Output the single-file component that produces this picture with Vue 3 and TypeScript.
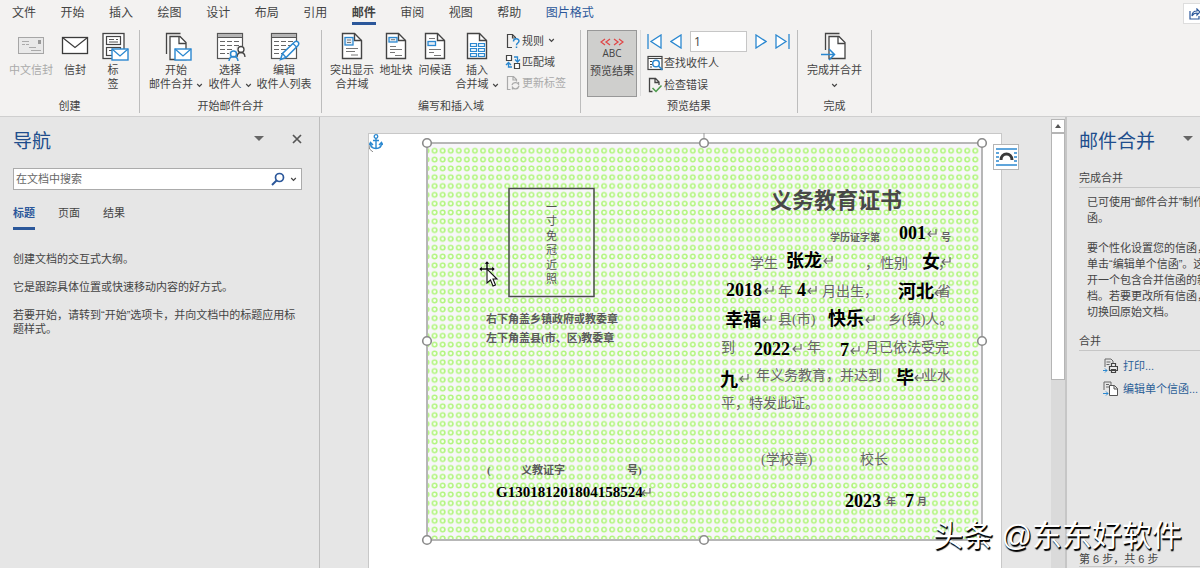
<script setup lang="ts">
import { ref } from 'vue'

interface BigCommand {
  icon: string
  lines: string[]
  size: string
  arrow?: boolean
  disabled?: boolean
}
interface Printed {
  x: number
  y: number
  text: string
  kind: string
}

const tabs = ['文件', '开始', '插入', '绘图', '设计', '布局', '引用', '邮件', '审阅', '视图', '帮助', '图片格式']
const activeTab = ref('邮件')

const createCommands: BigCommand[] = [
  { icon: 'cn-envelope', lines: ['中文信封'], size: 'w44', disabled: true },
  { icon: 'envelope', lines: ['信封'], size: 'w44' },
  { icon: 'labels', lines: ['标', '签'], size: 'w32' },
]
const startCommands: BigCommand[] = [
  { icon: 'start-merge', lines: ['开始', '邮件合并'], size: 'w56', arrow: true },
  { icon: 'recipients', lines: ['选择', '收件人'], size: 'w52', arrow: true },
  { icon: 'edit-list', lines: ['编辑', '收件人列表'], size: 'w56' },
]
const fieldCommands: BigCommand[] = [
  { icon: 'highlight', lines: ['突出显示', '合并域'], size: 'w44' },
  { icon: 'address', lines: ['地址块'], size: 'w44' },
  { icon: 'greeting', lines: ['问候语'], size: 'w34' },
  { icon: 'insert-field', lines: ['插入', '合并域'], size: 'w50', arrow: true },
]
const fieldTools = [
  { icon: 'rules', text: '规则', arrow: true, disabled: false },
  { icon: 'match', text: '匹配域', arrow: false, disabled: false },
  { icon: 'update', text: '更新标签', arrow: false, disabled: true },
]

const record = ref('1')
const query = ref('')
const navTabs = ['标题', '页面', '结果']
const activeNav = ref('标题')

const photoChars = ['一', '寸', '免', '冠', '近', '照']

const printed: Printed[] = [
  { x: 343, y: 65, text: '义务教育证书', kind: 'title' },
  { x: 403, y: 98, text: '学历证字第', kind: 'small' },
  { x: 514, y: 98, text: '号', kind: 'small' },
  { x: 323, y: 125, text: '学生', kind: 'body' },
  { x: 438, y: 125, text: '，', kind: 'body' },
  { x: 453, y: 125, text: '性别', kind: 'body' },
  { x: 511, y: 125, text: '，', kind: 'body' },
  { x: 351, y: 153, text: '年', kind: 'body' },
  { x: 395, y: 153, text: '月出生，', kind: 'body' },
  { x: 510, y: 153, text: '省', kind: 'body' },
  { x: 351, y: 181, text: '县(市)', kind: 'body' },
  { x: 461, y: 181, text: '乡(镇)人。', kind: 'body' },
  { x: 294, y: 209, text: '到', kind: 'body' },
  { x: 380, y: 209, text: '年', kind: 'body' },
  { x: 438, y: 209, text: '月已依法受完', kind: 'body' },
  { x: 329, y: 237, text: '年义务教育，并达到', kind: 'body' },
  { x: 496, y: 237, text: '业水', kind: 'body' },
  { x: 294, y: 265, text: '平，特发此证。', kind: 'body' },
  { x: 334, y: 321, text: '(学校章)', kind: 'body' },
  { x: 433, y: 321, text: '校长', kind: 'body' },
  { x: 459, y: 362, text: '年', kind: 'small' },
  { x: 490, y: 362, text: '月', kind: 'small' },
  { x: 59, y: 180, text: '右下角盖乡镇政府或教委章', kind: 'note' },
  { x: 59, y: 199, text: '左下角盖县(市、区)教委章', kind: 'note' },
  { x: 60, y: 331, text: '(', kind: 'note' },
  { x: 94, y: 331, text: '义教证字', kind: 'note' },
  { x: 200, y: 331, text: '号)', kind: 'note' },
]

const merged: Printed[] = [
  { x: 472, y: 96, text: '001', kind: 'field' },
  { x: 359, y: 124, text: '张龙', kind: 'field' },
  { x: 495, y: 125, text: '女', kind: 'field' },
  { x: 299, y: 153, text: '2018', kind: 'field' },
  { x: 370, y: 153, text: '4', kind: 'field' },
  { x: 471, y: 155, text: '河北', kind: 'field' },
  { x: 298, y: 183, text: '幸福', kind: 'field' },
  { x: 401, y: 182, text: '快乐', kind: 'field' },
  { x: 327, y: 212, text: '2022', kind: 'field' },
  { x: 413, y: 213, text: '7', kind: 'field' },
  { x: 293, y: 243, text: '九', kind: 'field' },
  { x: 469, y: 241, text: '毕', kind: 'field' },
  { x: 418, y: 364, text: '2023', kind: 'field' },
  { x: 478, y: 364, text: '7', kind: 'field' },
  { x: 69, y: 354, text: 'G130181201804158524', kind: 'serial' },
]

const marks = [
  [500, 86], [396, 113], [514, 114], [337, 143], [380, 143], [507, 145], [335, 172], [438, 172],
  [365, 201], [423, 203], [312, 231], [487, 230], [214, 345],
]
const handles = [
  [0, 0], [277, 0], [555, 0], [0, 198], [555, 198], [0, 397], [277, 397], [555, 397],
]
</script>

<template>
  <div class="word">
    <svg class="defs" aria-hidden="true">
      <defs>
        <symbol id="mini-envelope" viewBox="0 0 18 13">
          <rect x="1" y="1" width="16" height="11" fill="#fff" stroke="#2b88d0" stroke-width="1.4" />
          <path d="M1 1l8 7 8-7" fill="none" stroke="#2b88d0" stroke-width="1.3" />
        </symbol>
        <symbol id="page" viewBox="0 0 32 32">
          <path d="M6.5 3.5h12l7 7v18h-19z" fill="#fff" stroke="#444" stroke-width="1.4" />
          <path d="M18.5 3.5v7h7" fill="none" stroke="#444" stroke-width="1.4" />
        </symbol>
        <symbol id="cn-envelope" viewBox="0 0 32 32">
          <rect x="3.500" y="7.500" width="25" height="16" fill="#e9e9e9" stroke="#a6a6a6" />
          <path d="M7 11.500h7M7 14.500h3m1 0h3M14 17.500h7M16 20.500h10" stroke="#aaa" fill="none" />
          <rect x="23" y="10" width="3" height="4" fill="#999" />
        </symbol>
        <symbol id="envelope" viewBox="0 0 32 32">
          <rect x="3.500" y="7.500" width="25" height="16" fill="#fff" stroke="#3b3b3b" stroke-width="1.300" />
          <path d="M3.500 7.500L16 17.500l12.500-10" fill="none" stroke="#3b3b3b" stroke-width="1.200" />
        </symbol>
        <symbol id="labels" viewBox="0 0 32 32">
          <rect x="6" y="3.500" width="21" height="25" fill="#fff" stroke="#444" stroke-width="1.300" />
          <rect x="9.500" y="6.500" width="14" height="8" fill="none" stroke="#444" stroke-width="1.200" />
          <rect x="9.500" y="17.500" width="14" height="8" fill="none" stroke="#444" stroke-width="1.200" />
          <path d="M12 9.500h5m2 0h2M12 12h9M12 20.500h5" stroke="#555" fill="none" />
          <use href="#mini-envelope" x="14" y="18" width="18" height="13" />
        </symbol>
        <symbol id="start-merge" viewBox="0 0 32 32">
          <path d="M6.500 24V3.500h14" fill="none" stroke="#444" stroke-width="1.300" />
          <path d="M10 6.500h10l6 6v17H10z" fill="#fff" stroke="#444" stroke-width="1.300" />
          <path d="M19 6.500v7h7" fill="none" stroke="#444" stroke-width="1.300" />
          <use href="#mini-envelope" x="14" y="18" width="18" height="13" />
        </symbol>
        <symbol id="sheet" viewBox="0 0 32 32">
          <rect x="3.500" y="3.500" width="25" height="25" fill="#fff" stroke="#555" stroke-width="1.200" />
          <rect x="4" y="4" width="24" height="3.500" fill="#b5b5b5" />
          <path d="M4 7.500h24" stroke="#555" />
          <path d="M6 11.500h5m2 0h5m2 0h5M6 15.500h5m2 0h5m2 0h5M6 19.500h5m2 0h5M6 23.500h5m2 0h2" stroke="#666" fill="none" />
        </symbol>
        <symbol id="recipients" viewBox="0 0 32 32">
          <use href="#sheet" width="32" height="32" />
          <path d="M15 31V21h7v-5h10v15z" fill="#f3f2f1" />
          <circle cx="27" cy="19.500" r="3" fill="#fff" stroke="#444" stroke-width="1.300" />
          <path d="M23 27c.5-6 7.500-6 8 0" fill="none" stroke="#444" stroke-width="1.300" />
          <circle cx="19.500" cy="24" r="3" fill="#fff" stroke="#2b88d0" stroke-width="1.500" />
          <path d="M15 31c.5-6 8.500-6 9 0" fill="none" stroke="#2b88d0" stroke-width="1.500" />
        </symbol>
        <symbol id="edit-list" viewBox="0 0 32 32">
          <use href="#sheet" width="32" height="32" />
          <path d="M12.500 29.500l2-6L26.500 12q2-1.500 3.500 0t0 3.500L18 27.500z" fill="#fff" stroke="#2b88d0" stroke-width="1.500" />
          <path d="M14.500 23.500l3.500 4M25 13.500l3.500 3.500" stroke="#2b88d0" stroke-width="1.300" />
        </symbol>
        <symbol id="highlight" viewBox="0 0 32 32">
          <use href="#page" width="32" height="32" />
          <rect x="9" y="7.500" width="8" height="7.500" fill="#e4edf5" stroke="#2b88d0" stroke-width="1.300" />
          <path d="M11 10h4M11 12.500h4M10 18.500h12M10 21.500h9M15 25h7" stroke="#777" fill="none" />
        </symbol>
        <symbol id="address" viewBox="0 0 32 32">
          <use href="#page" width="32" height="32" />
          <rect x="9" y="7.500" width="8" height="4.500" fill="#e4edf5" stroke="#2b88d0" stroke-width="1.300" />
          <path d="M11 9.700h4M10 16.500h6M10 19.500h12M10 22.500h5M15 25.500h7" stroke="#777" fill="none" />
        </symbol>
        <symbol id="greeting" viewBox="0 0 32 32">
          <use href="#page" width="32" height="32" />
          <rect x="9" y="11.500" width="7.500" height="4" fill="#e4edf5" stroke="#2b88d0" stroke-width="1.300" />
          <path d="M10 8.500h6M10 19.500h12M10 22.500h5M15 25.500h7" stroke="#777" fill="none" />
        </symbol>
        <symbol id="insert-field" viewBox="0 0 32 32">
          <use href="#page" width="32" height="32" />
          <path d="M9.500 13.500h6v3h-6zM17.500 13.500h6v3h-6zM9.500 18.500h6v3h-6zM17.500 18.500h6v3h-6zM9.500 23.500h6v3h-6zM17.500 23.500h6v3h-6z" fill="#e8f3fb" stroke="#2b88d0" stroke-width="1.200" />
        </symbol>
        <symbol id="rules" viewBox="0 0 16 16">
          <path d="M7 14.500H2.500v-13h5l3 3v1M7.500 1.500v3.500h2" fill="none" stroke="#444" stroke-width="1.200" />
          <path d="M8.500 8.500c0-3.500 5.500-3.500 5.500-.5 0 2-2.500 2-2.500 4.200M11.500 13.500v1.500" fill="none" stroke="#2b88d0" stroke-width="1.500" />
        </symbol>
        <symbol id="match" viewBox="0 0 16 16">
          <path d="M1.500 1.500h5v5h-5zM9.500 9.500h5v5h-5z" fill="#fff" stroke="#444" stroke-width="1.200" />
          <path d="M9 3h3.500v4.500M10 5.500L12.500 8 15 5.500M7 13H3.500V9M1 11l2.500-2.500L6 11" fill="none" stroke="#2b88d0" stroke-width="1.300" />
        </symbol>
        <symbol id="update" viewBox="0 0 16 16">
          <path d="M5.500 14.500h-3v-13h6l3 3v2M8 1.500v3.500h3" fill="none" stroke="#aaa" stroke-width="1.200" />
          <path d="M7 10c1-3 5-3 6.500-1V7M14 11c-1 3.500-5 3.500-6.500 1.500v2" fill="none" stroke="#aaa" stroke-width="1.300" />
        </symbol>
        <symbol id="find" viewBox="0 0 16 16">
          <rect x="1" y="1.500" width="14" height="13" fill="#fff" stroke="#444" stroke-width="1.200" />
          <path d="M1 3.500h14M3 6.500h2M3 9.500h2M3 12h2" stroke="#444" stroke-width="1.200" />
          <circle cx="9" cy="8.500" r="3.300" fill="#fff" stroke="#2b88d0" stroke-width="1.500" />
          <path d="M11.500 11l4 4" stroke="#2b88d0" stroke-width="1.600" />
        </symbol>
        <symbol id="check" viewBox="0 0 16 16">
          <path d="M5.500 14.500h-3v-13h6l3.500 3.500v3M8 1.500v4h4" fill="none" stroke="#444" stroke-width="1.300" />
          <path d="M5.500 11l3.500 3.500 5.500-6" fill="none" stroke="#4b9a4b" stroke-width="1.500" />
        </symbol>
        <symbol id="finish" viewBox="0 0 32 32">
          <path d="M6.500 20V3.500h14" fill="none" stroke="#444" stroke-width="1.300" />
          <path d="M10 6.500h10l6 6v16H10z" fill="#fff" stroke="#444" stroke-width="1.300" />
          <path d="M19 6.500v7h7" fill="none" stroke="#444" stroke-width="1.300" />
          <path d="M2 24.500h13M10 19l5.500 5.500L10 30" fill="none" stroke="#2b88d0" stroke-width="1.500" />
        </symbol>
        <symbol id="chevron" viewBox="0 0 7 5">
          <path d="M1.200 1l2.300 2.300L5.800 1" fill="none" stroke="#444" stroke-width="1.200" />
        </symbol>
        <symbol id="return-mark" viewBox="0 0 10 8">
          <path d="M9 0v5H1M4 2L1 5l3 3" fill="none" stroke="#666" stroke-width="1.200" />
        </symbol>
      </defs>
    </svg>

    <header class="ribbon">
      <div class="tab-row">
        <nav class="tabs" aria-label="功能区">
          <button v-for="t in tabs" :key="t" type="button" class="tab"
            :class="{ active: t === activeTab, context: t === '图片格式' }" @click="activeTab = t">{{ t }}</button>
        </nav>
        <button type="button" class="share" aria-label="共享">
          <svg width="11" height="12" viewBox="0 0 11 12"><path d="M1 3v8h9V8M3 8c0-4 2-5 5-5V1l3 3-3 3V5C6 5 4 6 3 8z" fill="none" stroke="#2b579a" stroke-width="1.200" /></svg>
        </button>
      </div>

      <div class="groups">
        <section class="group create">
          <div class="commands">
            <button v-for="c in createCommands" :key="c.icon" type="button" class="big" :class="c.size" :disabled="c.disabled">
              <svg class="icon32"><use :href="'#' + c.icon" /></svg>
              <span v-for="l in c.lines" :key="l" class="line">{{ l }}</span>
            </button>
          </div>
          <h2>创建</h2>
        </section>

        <section class="group start">
          <div class="commands">
            <button v-for="c in startCommands" :key="c.icon" type="button" class="big" :class="c.size">
              <svg class="icon32"><use :href="'#' + c.icon" /></svg>
              <span v-for="(l, i) in c.lines" :key="l" class="line">{{ l }}<svg v-if="c.arrow && i === 1" class="chev"><use href="#chevron" /></svg></span>
            </button>
          </div>
          <h2>开始邮件合并</h2>
        </section>

        <section class="group fields">
          <div class="commands">
            <button v-for="c in fieldCommands" :key="c.icon" type="button" class="big" :class="c.size">
              <svg class="icon32"><use :href="'#' + c.icon" /></svg>
              <span v-for="(l, i) in c.lines" :key="l" class="line">{{ l }}<svg v-if="c.arrow && i === 1" class="chev"><use href="#chevron" /></svg></span>
            </button>
            <div class="stack">
              <button v-for="f in fieldTools" :key="f.icon" type="button" class="tool" :disabled="f.disabled">
                <svg class="icon16"><use :href="'#' + f.icon" /></svg>{{ f.text }}<svg v-if="f.arrow" class="chev"><use href="#chevron" /></svg>
              </button>
            </div>
          </div>
          <h2>编写和插入域</h2>
        </section>

        <section class="group preview">
          <div class="commands">
            <button type="button" class="big toggled" aria-pressed="true">
              <svg class="marks" viewBox="0 0 24 8"><path d="M5 1L1 4l4 3M10 1L6 4l4 3M14 1l4 3-4 3M19 1l4 3-4 3" fill="none" stroke="#e04848" stroke-width="1.300" /></svg>
              <span class="abc">ABC</span>
              <span class="line">预览结果</span>
            </button>
            <div class="stack records">
              <div class="record-row">
                <button type="button" class="step" aria-label="首记录"><svg width="15" height="15" viewBox="0 0 15 15"><path d="M1 0v15M14 1v13L4 7.500z" fill="#fff" stroke="#2b88d0" stroke-width="1.300" /></svg></button>
                <button type="button" class="step" aria-label="上一记录"><svg width="12" height="15" viewBox="0 0 12 15"><path d="M11 1v13L1 7.500z" fill="#fff" stroke="#2b88d0" stroke-width="1.300" /></svg></button>
                <input v-model="record" type="text" aria-label="记录">
                <button type="button" class="step" aria-label="下一记录"><svg width="12" height="15" viewBox="0 0 12 15"><path d="M1 1v13l10-6.500z" fill="#fff" stroke="#2b88d0" stroke-width="1.300" /></svg></button>
                <button type="button" class="step" aria-label="尾记录"><svg width="15" height="15" viewBox="0 0 15 15"><path d="M14 0v15M1 1v13l10-6.500z" fill="#fff" stroke="#2b88d0" stroke-width="1.300" /></svg></button>
              </div>
              <button type="button" class="tool"><svg class="icon16"><use href="#find" /></svg>查找收件人</button>
              <button type="button" class="tool"><svg class="icon16"><use href="#check" /></svg>检查错误</button>
            </div>
          </div>
          <h2>预览结果</h2>
        </section>

        <section class="group finish">
          <div class="commands">
            <button type="button" class="big">
              <svg class="icon32"><use href="#finish" /></svg>
              <span class="line">完成并合并</span>
              <span class="line"><svg class="chev"><use href="#chevron" /></svg></span>
            </button>
          </div>
          <h2>完成</h2>
        </section>
      </div>
    </header>

    <main class="workspace">
      <aside class="navigation">
        <div class="pane-head">
          <h1>导航</h1>
          <button type="button" aria-label="窗格选项"><svg width="10" height="6" viewBox="0 0 10 6"><path d="M0 0h10L5 5z" fill="#666" /></svg></button>
          <button type="button" aria-label="关闭"><svg width="10" height="10" viewBox="0 0 10 10"><path d="M1 1l8 8M9 1L1 9" stroke="#555" stroke-width="1.700" /></svg></button>
        </div>
        <div class="search">
          <input v-model="query" type="text" placeholder="在文档中搜索" aria-label="在文档中搜索">
          <button type="button" aria-label="搜索"><svg width="14" height="14" viewBox="0 0 14 14"><circle cx="8.500" cy="5.500" r="4" fill="none" stroke="#2b579a" stroke-width="1.700" /><path d="M5.500 8.500L1 13" stroke="#2b579a" stroke-width="2" /></svg></button>
          <button type="button" aria-label="搜索选项"><svg class="chev"><use href="#chevron" /></svg></button>
        </div>
        <div class="nav-tabs">
          <button v-for="n in navTabs" :key="n" type="button" :class="{ active: n === activeNav }" @click="activeNav = n">{{ n }}</button>
        </div>
        <p>创建文档的交互式大纲。</p>
        <p>它是跟踪具体位置或快速移动内容的好方式。</p>
        <p>若要开始，请转到“开始”选项卡，并向文档中的标题应用标题样式。</p>
      </aside>

      <section class="canvas">
        <div class="sheet">
          <svg class="anchor" width="14" height="18" viewBox="0 0 14 18">
            <path d="M1 11l-.500 4L4 18" fill="none" stroke="#888" />
            <circle cx="7" cy="2.500" r="1.800" fill="#fff" stroke="#2b88d0" stroke-width="1.300" />
            <path d="M7 4v11M4 6.500h6M1.500 9c0 4 2.500 5.500 5.500 5.500s5.500-1.500 5.500-5.500M0 11l1.500-2.500L4 11M10 11l2.500-2.500L14 11" fill="none" stroke="#2b88d0" stroke-width="1.400" />
          </svg>
          <svg class="certificate" viewBox="0 0 555 397">
            <defs>
              <pattern id="rings" x="3.600" y="3.400" width="8.070" height="8.810" patternUnits="userSpaceOnUse">
                <circle cx="4" cy="4.400" r="2.200" fill="#fbfff5" stroke="#b2f580" stroke-width="1.600" />
              </pattern>
            </defs>
            <rect width="555" height="397" fill="#f8f6fa" />
            <rect x="1" y="3" width="551" height="393" fill="url(#rings)" />
            <path d="M277 0v-10" stroke="#999" />
            <rect width="555" height="397" fill="none" stroke="#a0a0a0" stroke-width="1.500" />
            <rect x="82" y="45.500" width="85" height="108" fill="none" stroke="#4a4a4a" stroke-width="1.500" />
            <text v-for="(c, i) in photoChars" :key="c" x="119" :y="68 + i * 14.400" class="photo">{{ c }}</text>
            <text v-for="p in printed" :key="p.x + '-' + p.y" :x="p.x" :y="p.y" :class="p.kind">{{ p.text }}</text>
            <text v-for="m in merged" :key="m.x + '-' + m.y" :x="m.x" :y="m.y" :class="m.kind">{{ m.text }}</text>
            <use v-for="m in marks" :key="m[0] + '-' + m[1]" href="#return-mark" :x="m[0]" :y="m[1]" width="10" height="8" />
            <circle v-for="h in handles" :key="h[0] + '-' + h[1]" :cx="h[0]" :cy="h[1]" r="4.300" fill="#fff" stroke="#8a8a8a" stroke-width="1.600" />
            <g transform="translate(52 118)">
              <path d="M8 0l3 3H9v4h4V5l3 3-3 3V9H3v2L0 8l3-3v2h4V3H5z" fill="#111" stroke="#fff" stroke-width=".5" />
              <path d="M8 8v14l3.500-3 2.500 6 2.500-1-2.500-6h4z" fill="#fff" stroke="#111" stroke-width="1.100" />
            </g>
          </svg>
          <button type="button" class="layout-options" aria-label="布局选项">
            <svg width="21" height="18" viewBox="0 0 21 18">
              <path d="M0 1h21M0 17h21M0 5h3M18 5h3M0 9h3M18 9h3M0 13h3M18 13h3" stroke="#2b88d0" stroke-width="1.300" />
              <path d="M5 12c0-8 11-8 11 0" fill="none" stroke="#3a3a3a" stroke-width="3" />
            </svg>
          </button>
        </div>
      </section>

      <div class="scrollbar">
        <button type="button" aria-label="向上滚动"><svg width="6" height="4" viewBox="0 0 6 4"><path d="M0 4l3-4 3 4z" fill="#555" /></svg></button>
        <div class="thumb"></div>
      </div>

      <aside class="merge">
        <div class="merge-head">
          <h1>邮件合并</h1>
          <button type="button" aria-label="窗格选项"><svg width="10" height="6" viewBox="0 0 10 6"><path d="M0 0h10L5 5z" fill="#666" /></svg></button>
        </div>
        <h2>完成合并</h2>
        <p>已可使用“邮件合并”制作<br>函。</p>
        <p>要个性化设置您的信函，<br>单击“编辑单个信函”。这<br>开一个包含合并信函的新<br>档。若要更改所有信函，<br>切换回原始文档。</p>
        <h2 class="second">合并</h2>
        <ul>
          <li><a href="#print">
            <svg width="15" height="15" viewBox="0 0 15 15"><path d="M2 9V1h6l2 2v2M3.500 4h4M3.500 6.500h3" fill="none" stroke="#666" /><path d="M6.500 8.500h8v4h-8zM8.500 8V5.500h4V8M8.500 11.500h4v3h-4z" fill="#eee" stroke="#444" stroke-width="1.200" /><path d="M0 12.500h4M2 10.500l2 2-2 2" fill="none" stroke="#2b88d0" /></svg>打印...</a></li>
          <li><a href="#edit">
            <svg width="15" height="15" viewBox="0 0 15 15"><path d="M1 9V1h7v3M3 3.500h3M3 6h3" fill="none" stroke="#666" /><path d="M6.500 4.500h5l3 3v7h-8zM11 4.500V8h3.500" fill="#fff" stroke="#555" /><path d="M0 12.500h5M3 10.500l2 2-2 2" fill="none" stroke="#2b88d0" /></svg>编辑单个信函...</a></li>
        </ul>
        <footer>第 6 步，共 6 步</footer>
      </aside>
    </main>
    <div class="watermark">头条 @东东好软件</div>
  </div>
</template>

<style>
body {
  margin: 0;
}
</style>

<style scoped>
* {
  box-sizing: border-box;
}
.word {
  position: relative;
  display: flex;
  flex-direction: column;
  height: 100vh;
  overflow: hidden;
  background: #e6e6e6;
  color: #444;
  font: 11px/14px "Liberation Sans", "Noto Sans CJK SC", sans-serif;
}
.defs {
  position: absolute;
  width: 0;
  height: 0;
}
h1, h2, p, ul {
  margin: 0;
  padding: 0;
  font-weight: 400;
}
button {
  padding: 0;
  border: 0;
  background: none;
  color: inherit;
  font: inherit;
}
button:disabled {
  color: #aaa;
}
.ribbon {
  flex: none;
  background: #f3f2f1;
  border-bottom: 1px solid #cfcfcf;
}
.tab-row {
  display: flex;
  justify-content: space-between;
  height: 28px;
}
.tabs {
  display: flex;
  justify-content: space-between;
  width: 582px;
  margin-left: 12px;
}
.tab {
  height: 25px;
  padding-top: 3px;
  font-size: 12px;
  border-bottom: 3px solid transparent;
}
.tab.active {
  font-weight: 700;
  border-color: #2b579a;
}
.tab.context {
  color: #2b579a;
}
.share {
  display: flex;
  align-items: center;
  justify-content: flex-end;
  width: 17px;
  height: 21px;
  margin-top: 3px;
  background: #fff;
  border: 1px solid #ddd;
  border-right: 0;
}
.groups {
  display: flex;
  height: 88px;
}
.group {
  display: flex;
  flex-direction: column;
  margin: 2px 0 3px;
  border-right: 1px solid #bdbdbd;
}
.group h2 {
  font-size: 11px;
  text-align: center;
}
.commands {
  display: flex;
  height: 70px;
}
.create {
  width: 140px;
}
.create .commands {
  padding-left: 9px;
}
.start {
  width: 182px;
}
.start .commands {
  padding-left: 8px;
}
.fields {
  width: 259px;
}
.fields .commands {
  padding-left: 8px;
}
.preview {
  width: 217px;
}
.preview .commands {
  padding-left: 6px;
}
.finish {
  width: 74px;
}
.finish .commands {
  justify-content: center;
}
.big {
  display: flex;
  flex-direction: column;
  align-items: center;
  flex: none;
}
.w32 {
  width: 32px;
}
.w34 {
  width: 34px;
}
.w44 {
  width: 44px;
}
.w50 {
  width: 50px;
}
.w52 {
  width: 52px;
}
.w56 {
  width: 56px;
}
.line {
  white-space: nowrap;
}
.icon32 {
  flex: none;
  width: 32px;
  height: 32px;
  margin-bottom: 1px;
}
.icon16 {
  flex: none;
  width: 16px;
  height: 16px;
}
.chev {
  width: 7px;
  height: 5px;
  margin-left: 3px;
  vertical-align: middle;
}
.finish .chev {
  margin-left: 0;
}
.stack {
  display: flex;
  flex-direction: column;
  align-items: flex-start;
  margin-left: 3px;
}
.tool {
  display: flex;
  align-items: center;
  gap: 1px;
  height: 21px;
}
.toggled {
  width: 50px;
  height: 67px;
  padding-top: 7px;
  background: #cfcfcd;
  border: 1px solid #989898;
}
.marks {
  flex: none;
  width: 24px;
  height: 8px;
}
.abc {
  margin-bottom: 4px;
  line-height: 14px;
  font-family: "Open Sans", sans-serif;
  font-size: 10px;
}
.records {
  height: 66px;
  padding-left: 6px;
  border-left: 1px solid #ddd;
}
.record-row {
  display: flex;
  align-items: center;
  gap: 8px;
  height: 22px;
}
.record-row input {
  width: 57px;
  height: 21px;
  padding: 0 3px;
  border: 1px solid #c6c6c6;
  color: #444;
  font: 12px "Open Sans", sans-serif;
}
.step {
  display: flex;
}
.records .tool {
  height: 22px;
}
.workspace {
  display: flex;
  flex: 1;
  min-height: 0;
}
.navigation {
  flex: none;
  width: 320px;
  padding: 13px 17px 0 13px;
  border-right: 1px solid #bdbdbd;
}
h1 {
  color: #204d8c;
  font-size: 19px;
  line-height: 24px;
}
.pane-head {
  display: flex;
  align-items: center;
  gap: 28px;
}
.pane-head h1 {
  flex: 1;
}
.pane-head button {
  display: flex;
  margin-bottom: 6px;
}
.search {
  display: flex;
  align-items: center;
  gap: 5px;
  height: 22px;
  margin-top: 14px;
  padding-right: 4px;
  background: #fff;
  border: 1px solid #ababab;
}
.search input {
  flex: 1;
  min-width: 0;
  padding: 0 2px;
  border: 0;
  outline: 0;
  background: none;
  font: inherit;
}
.search input::placeholder {
  color: #666;
}
.search button {
  display: flex;
}
.search .chev {
  margin-left: 0;
}
.nav-tabs {
  display: flex;
  gap: 23px;
  margin: 16px 0 22px;
}
.nav-tabs button {
  height: 24px;
  padding-bottom: 7px;
  border-bottom: 3px solid transparent;
}
.nav-tabs .active {
  color: #2b579a;
  font-weight: 700;
  border-color: #2b579a;
}
.navigation p {
  margin-bottom: 14px;
}
.canvas {
  flex: 1;
  min-width: 0;
  padding: 16px 49px 0 48px;
  overflow: hidden;
}
.sheet {
  position: relative;
  height: 100%;
  padding: 9px 19px 0 58px;
  background: #fff;
  border: 1px solid #c8c8c8;
  border-bottom: 0;
}
.anchor {
  position: absolute;
  left: 0;
  top: 0;
}
.certificate {
  display: block;
  width: 100%;
  overflow: visible;
  font-family: "Liberation Serif", "Noto Sans CJK SC", serif;
}
.title {
  fill: #484848;
  font-size: 22px;
  font-weight: 700;
}
.body {
  fill: #666;
  font-size: 14px;
}
.small {
  fill: #626262;
  font-size: 10px;
  font-weight: 700;
}
.note {
  fill: #5b5b5b;
  font-size: 11px;
  font-weight: 700;
}
.photo {
  fill: #555;
  font-size: 11px;
}
.field {
  fill: #000;
  font-size: 18px;
  font-weight: 700;
}
.serial {
  fill: #000;
  font-size: 15px;
  font-weight: 700;
}
.layout-options {
  position: absolute;
  right: -18px;
  top: 10px;
  display: flex;
  align-items: center;
  justify-content: center;
  width: 26px;
  height: 26px;
  background: #fff;
  border: 1px solid #b5b5b5;
}
.scrollbar {
  flex: none;
  width: 14px;
  margin-top: 2px;
  background: #dadada;
}
.scrollbar button {
  display: flex;
  align-items: center;
  justify-content: center;
  width: 14px;
  height: 14px;
  background: #fff;
  border: 1px solid #b5b5b5;
}
.thumb {
  height: 55%;
  background: #fff;
  border: 1px solid #b5b5b5;
}
.merge {
  display: flex;
  flex-direction: column;
  flex: none;
  width: 135px;
  padding: 13px 0 1px 12px;
  border-left: 2px solid #c6c6c6;
  overflow: hidden;
  white-space: nowrap;
}
.merge-head {
  display: flex;
  align-items: center;
  justify-content: space-between;
  padding-right: 7px;
}
.merge-head button {
  display: flex;
  margin-bottom: 6px;
}
.merge h2 {
  margin: 17px 0 6px;
  padding-bottom: 2px;
  border-bottom: 1px solid #c6c6c6;
  font-size: 11px;
}
.merge .second {
  margin: 0 0 3px;
}
.merge p {
  margin-bottom: 14px;
  padding-left: 8px;
  line-height: 16px;
}
.merge ul {
  padding-left: 24px;
  list-style: none;
}
.merge a {
  display: flex;
  align-items: center;
  gap: 5px;
  height: 23px;
  color: #2b6097;
  text-decoration: none;
}
.merge footer {
  margin-top: auto;
  border-bottom: 1px solid #c6c6c6;
}
.watermark {
  position: absolute;
  right: 18px;
  bottom: 12px;
  color: #fff;
  font-size: 30px;
  line-height: 40px;
  text-shadow: 1px 2px 1px #000, 1px 1px 0 #000;
}
</style>
